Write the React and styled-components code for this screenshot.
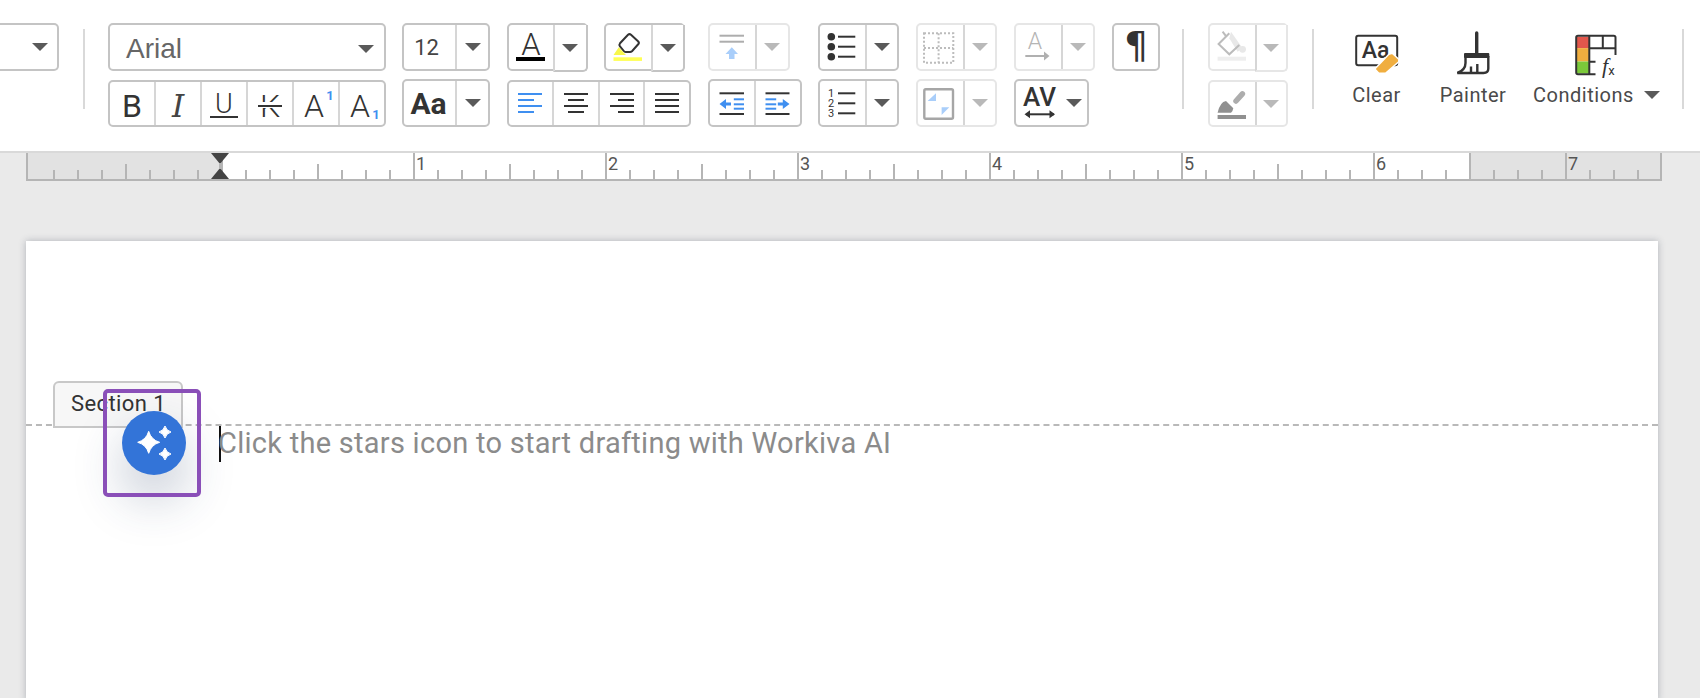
import React from 'react'
import styled, { createGlobalStyle } from 'styled-components'

const GlobalStyle = createGlobalStyle`
html, body {
  margin: 0;
  padding: 0;
  background: #eaeaea;
  font-family: Roboto, "Liberation Sans", sans-serif;
}
* { box-sizing: border-box; }
`

const Screen = styled.div`
width: 1700px;
height: 698px;
overflow: hidden;
background: #eaeaea;
`
const Toolbar = styled.div`
height: 153px;
padding-top: 23px;
background: #fff;
border-bottom: 2px solid #d9d9d9;
display: flex;
align-items: flex-start;
`
const Column = styled.div`
width: ${p => p.$w}px;
margin-left: ${p => p.$ml || 0}px;
display: flex;
flex-direction: column;
gap: 8px;
flex: none;
`
const Row = styled.div`
height: 48px;
display: flex;
gap: 16.5px;
align-items: flex-end;
`
const Separator = styled.div`
width: 2px;
height: 80px;
margin: 6px 0 0 ${p => p.$ml}px;
background: #d9d9d9;
flex: none;
`
const Group = styled.div`
display: flex;
flex: none;
width: ${p => (p.$w ? `${p.$w}px` : '100%')};
height: ${p => (p.$short ? 47 : 48)}px;
background: #fff;
border: 2px solid ${p => (p.$off ? '#e6e6e6' : '#c4c4c4')};
border-radius: 5px;
`
const Cell = styled.div`
flex: ${p => (p.$w ? `0 0 ${p.$w}px` : '1 1 0')};
min-width: 0;
display: flex;
align-items: center;
justify-content: center;
& + & { border-left: 2px solid ${p => (p.$off ? '#d6d6d6' : '#c4c4c4')}; }
`
const DropCell = styled(Cell)`
margin: 0 -2px -3px 0;
background: #fff;
border-right: 2px solid ${p => (p.$off ? '#e6e6e6' : '#c4c4c4')};
border-bottom: 2px solid ${p => (p.$off ? '#e6e6e6' : '#c4c4c4')};
border-radius: 0 0 5px 0;
`
const Caret = styled.span`
width: 0;
height: 0;
flex: none;
border-left: 8px solid transparent;
border-right: 8px solid transparent;
border-top: 8px solid ${p => (p.$off ? '#b9b9b9' : '#5a5a5a')};
margin-left: ${p => p.$ml || 0}px;
`
const Ic = styled.svg`
width: 46px;
height: 44px;
flex: none;
display: block;
overflow: visible;
`
const FontValue = styled.div`
flex: 1;
display: flex;
align-items: center;
justify-content: space-between;
padding: 3px 10px 0 16px;
font-family: "Liberation Sans", Arial, sans-serif;
font-size: 28px;
color: #666;
`
const SizeValue = styled.span`
font-size: 22px;
color: #444;
margin-right: 6px;
`
const StyleLeft = styled.div`
width: 59px;
height: 48px;
border: 2px solid #c4c4c4;
border-left: none;
border-radius: 0 5px 5px 0;
display: flex;
align-items: center;
justify-content: flex-end;
padding-right: 9px;
flex: none;
`
const BigButton = styled.div`
width: ${p => p.$w}px;
margin-left: ${p => p.$ml}px;
flex: none;
display: flex;
flex-direction: column;
align-items: center;
padding-top: 7px;
`
const BigIcon = styled.svg`
width: 60px;
height: 48px;
display: block;
overflow: visible;
`
const BigLabel = styled.div`
display: flex;
align-items: center;
height: 26px;
margin-top: 4px;
font-size: 20px;
letter-spacing: 0.5px;
color: #4a4a4a;
white-space: nowrap;
`

const Ruler = styled.div`
position: relative;
margin-left: 26px;
width: 1636px;
height: 28px;
display: flex;
overflow: hidden;
background: #fff;
padding-left: 1px;
border-left: 2px solid #b5b5b5;
border-right: 2px solid #b5b5b5;
border-bottom: 2px solid #b5b5b5;
`
const RulerMargin = styled.div`
position: absolute;
top: 0;
bottom: 0;
background: #e2e2e2;
${p => (p.$right ? 'left: 1441px; right: 0; border-left: 2px solid #b5b5b5;' : 'left: 0; width: 192px;')}
`
const InchCell = styled.div`
position: relative;
flex: 0 0 192px;
height: 26px;
border-left: 2px solid ${p => (p.$first ? 'transparent' : '#b5b5b5')};
padding: 1px 0 0 1px;
font-size: 18px;
line-height: 20px;
color: #555;
background-image:
  repeating-linear-gradient(90deg, transparent 0 22px, #b5b5b5 22px 24px),
  linear-gradient(#b5b5b5, #b5b5b5);
background-size: 100% 9px, 2px 15px;
background-position: left bottom, 94px bottom;
background-repeat: no-repeat;
`
const RulerMarker = styled.svg`
position: absolute;
left: 183px;
top: 0;
width: 18px;
height: 26px;
`

const Page = styled.div`
position: relative;
margin: 60px 0 0 26px;
width: 1632px;
height: 460px;
background: #fff;
box-shadow: 0 0 7px rgba(40, 50, 70, 0.3);
`
const SectionZone = styled.div`
height: 185px;
padding-left: 27px;
display: flex;
align-items: flex-end;
border-bottom: 2px dashed #b9b9b9;
`
const SectionTab = styled.div`
width: 130px;
height: 47px;
margin-bottom: -4px;
padding: 8px 0 0 16px;
background: #f7f7f7;
border: 2px solid #c8c8c8;
border-radius: 6px 6px 0 0;
font-size: 22px;
letter-spacing: 0.4px;
color: #333;
white-space: nowrap;
`
const Draft = styled.div`
padding-left: 193px;
display: flex;
align-items: flex-start;
`
const TextCaret = styled.span`
width: 2px;
height: 36px;
background: #111;
flex: none;
`
const Placeholder = styled.div`
height: 36px;
margin: -1px 0 0 -3px;
line-height: 36px;
font-size: 29px;
letter-spacing: 0.27px;
color: #8b8b8b;
white-space: nowrap;
`
const AiFrame = styled.div`
position: absolute;
left: 77px;
top: 148px;
width: 98px;
height: 108px;
border: 4px solid #8a4fb8;
border-radius: 5px;
`
const AiButton = styled.div`
position: absolute;
left: 96px;
top: 170px;
width: 64px;
height: 64px;
border-radius: 50%;
background: #3374d8;
box-shadow: 0 24px 50px rgba(40, 60, 100, 0.28);
`

const DARK = '#333'
const BLUE = '#3f8ff0'
const PALE = '#a9cefa'

const star = (cx, cy, r) => {
  const k = r * 0.22
  return `M${cx} ${cy - r}Q${cx + k} ${cy - k} ${cx + r} ${cy}Q${cx + k} ${cy + k} ${cx} ${cy + r}Q${cx - k} ${cy + k} ${cx - r} ${cy}Q${cx - k} ${cy - k} ${cx} ${cy - r}Z`
}

const Lines = ({ items, color = DARK, width = 2 }) => (
  <g stroke={color} strokeWidth={width}>
    {items.map(([x1, x2, y]) => (
      <line key={`${x1}-${y}`} x1={x1} x2={x2} y1={y} y2={y} />
    ))}
  </g>
)

const Letter = ({ x = 23, y = 35, size = 32, weight = 300, color = DARK, family = 'Roboto, sans-serif', italic, children }) => (
  <text
    x={x}
    y={y}
    textAnchor="middle"
    fontSize={size}
    fontWeight={weight}
    fontFamily={family}
    fontStyle={italic ? 'italic' : 'normal'}
    fill={color}
  >
    {children}
  </text>
)

const Split = ({ off, w = '100%', main = 45, short, drop, icon }) => {
  const Arrow = drop ? DropCell : Cell
  return (
    <Group $w={w === '100%' ? 0 : w} $off={off} $short={short}>
      <Cell $w={main}>{icon}</Cell>
      <Arrow $off={off}><Caret $off={off} /></Arrow>
    </Group>
  )
}

const ALIGN_ROWS = {
  left: [[11, 35, 12], [11, 27, 18], [11, 35, 24], [11, 27, 30]],
  center: [[11, 35, 12], [15, 31, 18], [11, 35, 24], [15, 31, 30]],
  right: [[11, 35, 12], [19, 35, 18], [11, 35, 24], [19, 35, 30]],
  full: [[11, 35, 12], [11, 35, 18], [11, 35, 24], [11, 35, 30]],
}

const App = () => {
  return (
    <Screen>
      <GlobalStyle />
      <Toolbar>
        <StyleLeft><Caret /></StyleLeft>
        <Separator $ml={24} />

        <Column $w={277.5} $ml={23}>
          <Row>
            <Group>
              <FontValue>Arial<Caret /></FontValue>
            </Group>
          </Row>
          <Row>
            <Group $short>
              <Cell><Ic viewBox="0 0 46 44"><Letter weight={400}>B</Letter></Ic></Cell>
              <Cell><Ic viewBox="0 0 46 44"><Letter size={31} weight={400} color="#444" family="'DejaVu Serif', serif" italic>I</Letter></Ic></Cell>
              <Cell>
                <Ic viewBox="0 0 46 44">
                  <Letter size={27} y={31}>U</Letter>
                  <Lines items={[[9, 37, 35]]} />
                </Ic>
              </Cell>
              <Cell>
                <Ic viewBox="0 0 46 44">
                  <Letter>K</Letter>
                  <rect x="9" y="20" width="28" height="6" fill="#fff" />
                  <Lines items={[[11, 35, 24]]} />
                </Ic>
              </Cell>
              <Cell>
                <Ic viewBox="0 0 46 44">
                  <Letter x={21}>A</Letter>
                  <Letter x={37} y={18} size={13} weight={700} color={BLUE}>1</Letter>
                </Ic>
              </Cell>
              <Cell>
                <Ic viewBox="0 0 46 44">
                  <Letter x={21}>A</Letter>
                  <Letter x={37} y={37} size={13} weight={700} color={BLUE}>1</Letter>
                </Ic>
              </Cell>
            </Group>
          </Row>
        </Column>

        <Column $w={88} $ml={16.5}>
          <Row>
            <Group>
              <Cell $w={51}><SizeValue>12</SizeValue></Cell>
              <Cell><Caret /></Cell>
            </Group>
          </Row>
          <Row>
            <Split
              main={51}
              icon={<Ic viewBox="0 0 46 44"><Letter x={21.5} y={33} size={30} weight={700}>Aa</Letter></Ic>}
            />
          </Row>
        </Column>

        <Column $w={184.5} $ml={16.5}>
          <Row>
            <Split
              w={81}
              main={44.5}
              drop
              icon={
                <Ic viewBox="0 0 46 44">
                  <Letter y={30} size={31}>A</Letter>
                  <rect x="8" y="32" width="29" height="4" fill="#000" />
                </Ic>
              }
            />
            <Split
              w={81}
              main={44.5}
              drop
              icon={
                <Ic viewBox="0 0 46 44">
                  <path d="M15 18.3L23 9.8Q24.5 8.5 26 9.8L33 16.2Q34.5 17.7 33.4 19L27 26.2Q26.2 26.9 25 26.9H20.5Q19.5 26.9 18.8 26L15 21.3Q13.8 19.7 15 18.3Z" fill="#fff" stroke={DARK} strokeWidth="2" />
                  <polygon points="8.5,30 13.8,22.3 19,27.9 21,30" fill="#f7f74a" />
                  <rect x="8.5" y="32.3" width="28.5" height="3.6" fill="#ffff55" />
                </Ic>
              }
            />
          </Row>
          <Row>
            <Group $short>
              {['left', 'center', 'right', 'full'].map(name => (
                <Cell key={name}>
                  <Ic viewBox="0 0 46 44">
                    <Lines items={ALIGN_ROWS[name]} color={name === 'left' ? BLUE : DARK} />
                  </Ic>
                </Cell>
              ))}
            </Group>
          </Row>
        </Column>

        <Column $w={94.5} $ml={16.5}>
          <Row>
            <Split
              off
              w={82}
              icon={
                <Ic viewBox="0 0 46 44">
                  <Lines items={[[10.5, 35, 10.7], [10.5, 35, 16.7]]} color="#adadad" />
                  <polygon points="22.8,22.3 29,29 25.5,29 25.5,34 20,34 20,29 16.5,29" fill={PALE} />
                </Ic>
              }
            />
          </Row>
          <Row>
            <Group>
              <Cell>
                <Ic viewBox="0 0 46 44">
                  <Lines items={[[10.5, 35, 12.3], [10.5, 35, 33]]} />
                  <Lines items={[[24.8, 35, 18.3], [24.8, 35, 23.3], [24.8, 35, 27.7]]} color={BLUE} />
                  <polygon points="10.5,23 17,18 17,21.5 22,21.5 22,24.5 17,24.5 17,28" fill={BLUE} />
                </Ic>
              </Cell>
              <Cell>
                <Ic viewBox="0 0 46 44">
                  <Lines items={[[10.5, 34.5, 12.3], [10.5, 34.5, 33]]} />
                  <Lines items={[[10.5, 21.2, 18.3], [10.5, 21.2, 23.3], [10.5, 21.2, 27.7]]} color={BLUE} />
                  <polygon points="34.5,23 27.8,18 27.8,21.5 22.8,21.5 22.8,24.5 27.8,24.5 27.8,28" fill={BLUE} />
                </Ic>
              </Cell>
            </Group>
          </Row>
        </Column>

        <Column $w={81.5} $ml={15.5}>
          <Row>
            <Split
              icon={
                <Ic viewBox="0 0 46 44">
                  <circle cx="12.3" cy="11.7" r="3.8" fill={DARK} />
                  <circle cx="12.3" cy="21.7" r="3.8" fill={DARK} />
                  <circle cx="12.3" cy="31.7" r="3.8" fill={DARK} />
                  <Lines items={[[19, 36.3, 11.7], [19, 36.3, 21.7], [19, 36.3, 31.7]]} />
                </Ic>
              }
            />
          </Row>
          <Row>
            <Split
              icon={
                <Ic viewBox="0 0 46 44">
                  <Letter x={12} y={16.3} size={11} weight={400}>1</Letter>
                  <Letter x={12} y={26.3} size={11} weight={400}>2</Letter>
                  <Letter x={12} y={36.3} size={11} weight={400}>3</Letter>
                  <Lines items={[[19, 36.3, 12.3], [19, 36.3, 22.3], [19, 36.3, 32.3]]} />
                </Ic>
              }
            />
          </Row>
        </Column>

        <Column $w={81.5} $ml={16.5}>
          <Row>
            <Split
              off
              icon={
                <Ic viewBox="0 0 46 44">
                  <g stroke="#bcbcbc" strokeWidth="2" strokeDasharray="2 2" fill="none">
                    <rect x="7" y="8.3" width="29.3" height="29.4" />
                    <line x1="21.6" x2="21.6" y1="8.3" y2="37.7" />
                    <line x1="7" x2="36.3" y1="23" y2="23" />
                  </g>
                </Ic>
              }
            />
          </Row>
          <Row>
            <Split
              off
              icon={
                <Ic viewBox="0 0 46 44">
                  <rect x="7.3" y="8.3" width="28.7" height="29.4" rx="1.5" fill="none" stroke="#a6a6a6" strokeWidth="2.4" />
                  <polygon points="19,12.3 19,20 10.6,20" fill={PALE} />
                  <polygon points="24.6,26.3 32.3,26.3 24.6,34" fill={PALE} />
                </Ic>
              }
            />
          </Row>
        </Column>

        <Column $w={145.5} $ml={16.5}>
          <Row>
            <Split
              off
              w={81.5}
              icon={
                <Ic viewBox="0 0 46 44">
                  <Letter x={20} y={24.3} size={23} color="#b5b5b5">A</Letter>
                  <Lines items={[[10.3, 33, 31]]} color="#b0b0b0" />
                  <polygon points="34.5,31 29,26.5 29,35.5" fill="#b0b0b0" />
                </Ic>
              }
            />
            <Group $w={48}>
              <Cell>
                <Ic viewBox="0 0 46 44"><Letter y={33} size={38} weight={400} family="'DejaVu Sans', sans-serif">¶</Letter></Ic>
              </Cell>
            </Group>
          </Row>
          <Row>
            <Group $w={75.5}>
              <Ic viewBox="0 0 46 44">
                <Letter x={23.5} y={25} size={26} weight={500}>AV</Letter>
                <Lines items={[[10, 38, 33.3]]} />
                <polygon points="8.5,33.3 14,29.3 14,37.3" fill={DARK} />
                <polygon points="39,33.3 33.5,29.3 33.5,37.3" fill={DARK} />
              </Ic>
              <Cell><Caret /></Cell>
            </Group>
          </Row>
        </Column>

        <Separator $ml={23} />

        <Column $w={80.5} $ml={23.5}>
          <Row>
            <Split
              off
              drop
              icon={
                <Ic viewBox="0 0 46 44">
                  <polygon points="22,6.7 33.6,23.3 28.6,26.7 20.3,13.3" fill="#e8e8e8" />
                  <circle cx="33.6" cy="24.3" r="3.4" fill="#e8e8e8" />
                  <path d="M20.3 8.3L9.6 19L20.3 29.3L30.3 20" fill="none" stroke="#bcbcbc" strokeWidth="2" />
                  <line x1="13.6" y1="6.7" x2="17.4" y2="11.7" stroke="#bcbcbc" strokeWidth="2" />
                  <rect x="8.6" y="31.7" width="28.4" height="4" fill="#eee" />
                </Ic>
              }
            />
          </Row>
          <Row>
            <Split
              off
              short
              icon={
                <Ic viewBox="0 0 46 44">
                  <path d="M8.6 30.7Q11 20 17 19L24.3 26.3Q24 29 22 30.7Z" fill="#909090" />
                  <line x1="27" y1="19" x2="33.4" y2="11.8" stroke="#adadad" strokeWidth="5.5" strokeLinecap="round" />
                  <rect x="8.6" y="33" width="28.4" height="4" fill="#909090" />
                </Ic>
              }
            />
          </Row>
        </Column>

        <Separator $ml={24} />

        <BigButton $w={80} $ml={22.5}>
          <BigIcon viewBox="0 0 60 48">
            <rect x="9.2" y="5.7" width="41" height="29.5" rx="2" fill="#fff" stroke={DARK} strokeWidth="2" />
            <Letter x={28.5} y={27.7} size={23} weight={500}>Aa</Letter>
            <polygon points="27.8,39 41.8,24.3 45.2,23.3 51.8,29.3 51.8,31.7 38.5,43.3 31.8,43.3" fill="#f0ae3f" stroke="#fff" strokeWidth="1.5" />
          </BigIcon>
          <BigLabel>Clear</BigLabel>
        </BigButton>

        <BigButton $w={80} $ml={16.5}>
          <BigIcon viewBox="0 0 60 48">
            <line x1="33.7" y1="3" x2="33.7" y2="23" stroke={DARK} strokeWidth="3.4" strokeLinecap="round" />
            <path d="M22 24H45.3V27H22Z" fill={DARK} stroke={DARK} strokeWidth="2" strokeLinejoin="round" />
            <path d="M45.3 26V38.5Q45.3 43 40.5 43H14.3Q22.5 40 22.5 33V26" fill="none" stroke={DARK} strokeWidth="2.4" />
            <path d="M28 43V36.5M34.3 43V34" fill="none" stroke={DARK} strokeWidth="2.4" />
          </BigIcon>
          <BigLabel>Painter</BigLabel>
        </BigButton>

        <BigButton $w={127} $ml={20}>
          <BigIcon viewBox="0 0 60 48">
            <rect x="10" y="6.7" width="12" height="11.4" fill="#e2574c" />
            <rect x="10" y="18.1" width="12" height="13.4" fill="#f0ae3f" />
            <rect x="10" y="31.5" width="12" height="12" fill="#7bc93a" />
            <path d="M28.5 44.3H11Q9.2 44.3 9.2 42.5V7.5Q9.2 5.7 11 5.7H46.7Q48.5 5.7 48.5 7.5V25M22.3 5.7V44.3M22.3 18.3H48.5M35.8 5.7V18.3M22.3 31.7H28.5" fill="none" stroke={DARK} strokeWidth="2" />
            <Letter x={38} y={43} size={22} weight={400} italic family="'Liberation Serif', serif">f</Letter>
            <Letter x={44.5} y={44.5} size={13} weight={400}>x</Letter>
          </BigIcon>
          <BigLabel>Conditions<Caret $ml={10} /></BigLabel>
        </BigButton>

        <Separator $ml={22} />
      </Toolbar>

      <Ruler>
        <RulerMargin />
        <RulerMargin $right />
        <InchCell $first />
        {['', 1, 2, 3, 4, 5, 6, 7].map(n => (
          <InchCell key={n}>{n}</InchCell>
        ))}
        <RulerMarker viewBox="0 0 18 26">
          <polygon points="0,0 18,0 9,11" fill="#444" />
          <polygon points="0,26 18,26 9,15" fill="#444" />
          <rect x="8" y="10" width="2" height="6" fill="#b5b5b5" />
        </RulerMarker>
      </Ruler>

      <Page>
        <SectionZone>
          <SectionTab>Section 1</SectionTab>
        </SectionZone>
        <Draft>
          <TextCaret />
          <Placeholder>Click the stars icon to start drafting with Workiva AI</Placeholder>
        </Draft>
        <AiButton>
          <svg width="64" height="64" viewBox="0 0 64 64">
            <path d={star(26.7, 31.3, 11)} fill="#fff" stroke="#fff" strokeWidth="1" strokeLinejoin="round" />
            <path d={star(43, 21, 6)} fill="#fff" stroke="#fff" strokeWidth="1" strokeLinejoin="round" />
            <path d={star(43, 43, 6)} fill="#fff" stroke="#fff" strokeWidth="1" strokeLinejoin="round" />
          </svg>
        </AiButton>
        <AiFrame />
      </Page>
    </Screen>
  )
}

export default App
